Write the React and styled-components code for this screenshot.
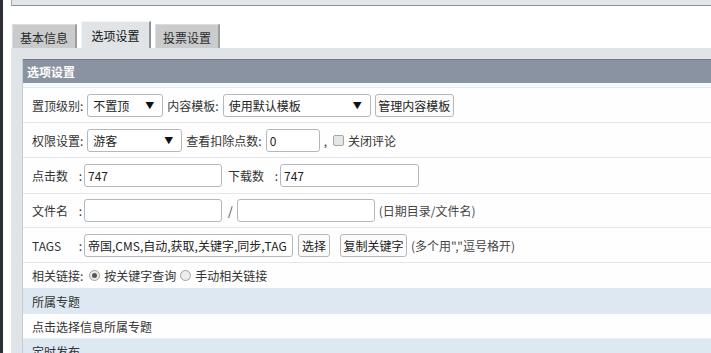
import React from 'react'
import styled, {createGlobalStyle} from 'styled-components'

const GlobalStyle = createGlobalStyle`
    html, body {
        margin: 0;
        padding: 0;
        background: #fff;
        font-family: "Noto Sans CJK SC", "Noto Sans", sans-serif;
        font-size: 12px;
        color: #333;
    }
`
const Page = styled.div`
    display: flex;
    height: 100vh;
    overflow: hidden;
`
const SideStrip = styled.div`
    width: 3px;
    background: #2d3035;
    flex-shrink: 0;
`
const Main = styled.div`
    flex: 1;
    display: flex;
    flex-direction: column;
    padding-left: 8px;
    min-width: 0;
`
const TopBar = styled.div`
    flex-shrink: 0;
    height: 5px;
    background: #e3e6e9;
    border-left: 1px solid #a3a8ae;
    border-bottom: 1px solid #8e939a;
`
const TabBar = styled.div`
    flex-shrink: 0;
    display: flex;
    align-items: flex-end;
    gap: 4px;
    height: 42px;
    padding-left: 1px;
`
const Tab = styled.div`
    box-sizing: border-box;
    height: ${p => p.active ? 27 : 24}px;
    width: ${p => p.active ? 70 : 65}px;
    display: flex;
    align-items: center;
    justify-content: center;
    background: ${p => p.active ? '#e1e4e6' : '#c9cbcd'};
    border-top: 1px solid ${p => p.active ? '#f4f5f6' : '#dadcde'};
    border-left: 1px solid ${p => p.active ? '#f4f5f6' : '#dadcde'};
    border-right: 2px solid ${p => p.active ? '#8d9298' : '#9a9ea3'};
    color: ${p => p.active ? '#111' : '#2a2a2a'};
    font-size: 12px;
    padding-top: ${p => p.active ? 0 : 2}px;
`
const TabBody = styled.div`
    flex: 1;
    min-height: 0;
    overflow: hidden;
    background: #e1e4e6;
    padding: 11px 0 0 11px;
`
const Panel = styled.div`
    background: #fff;
    border-left: 1px solid #c6ccd2;
`
const PanelHeader = styled.div`
    height: 23px;
    border-top: 1px solid #6f7884;
    background: #8a93a1;
    color: #fff;
    font-weight: bold;
    font-size: 12px;
    display: flex;
    align-items: center;
    padding-left: 4px;
`
const Rows = styled.div`
    padding-top: 4px;
    background: #f6f9fa;
`
const Row = styled.div`
    box-sizing: border-box;
    height: ${p => p.h}px;
    display: flex;
    align-items: center;
    gap: 4px;
    padding-left: 9px;
    border-top: 1px solid #e2e8ed;
    background: #fefefe;
    white-space: nowrap;
`
const SectionHead = styled.div`
    box-sizing: border-box;
    height: ${p => p.h || 25}px;
    display: flex;
    align-items: center;
    padding-left: 9px;
    background: #dde8f2;
    border-top: 1px solid ${p => p.line ? '#e9f0f6' : '#dde8f2'};
    color: #333;
`
const Label = styled.span`
    display: inline-flex;
    justify-content: space-between;
    width: ${p => p.w ? p.w + 'px' : 'auto'};
    margin-left: ${p => p.ml || 0}px;
    color: #333;
`
const SelectBox = styled.div`
    box-sizing: border-box;
    width: ${p => p.w}px;
    height: 23px;
    border: 1px solid #b4b8bd;
    border-radius: 3px;
    background: #fff;
    display: flex;
    align-items: center;
    justify-content: space-between;
    padding: 0 8px 0 5px;
    color: #222;
`
const Arrow = styled.span`
    font-size: 9px;
    color: #111;
`
const Field = styled.input`
    box-sizing: border-box;
    width: ${p => p.w}px;
    height: 23px;
    border: 1px solid #b4b8bd;
    border-radius: 3px;
    background: #fff;
    padding: 0 3px;
    font-family: inherit;
    font-size: 12px;
    color: #222;
    margin-left: ${p => p.ml || 0}px;
    outline: none;
`
const Button = styled.button`
    box-sizing: border-box;
    height: 23px;
    width: ${p => p.w}px;
    border: 1px solid #b4b8bd;
    border-radius: 3px;
    background: #fbfbfb;
    font-family: inherit;
    font-size: 12px;
    color: #222;
    padding: 0;
    margin-left: ${p => p.ml || 0}px;
`
const Check = styled.span`
    box-sizing: border-box;
    width: 11px;
    height: 11px;
    border: 1px solid #a6a6a6;
    border-radius: 2px;
    background: #e6e6e6;
    margin-left: ${p => p.ml || 0}px;
`
const Radio = styled.span`
    box-sizing: border-box;
    width: 11px;
    height: 11px;
    border: 1px solid #a0a0a0;
    border-radius: 50%;
    background: #ececec;
    display: inline-flex;
    align-items: center;
    justify-content: center;
    margin-left: ${p => p.ml || 0}px;

    &::after {
        content: '';
        width: 5px;
        height: 5px;
        border-radius: 50%;
        background: ${p => p.checked ? '#555' : 'transparent'};
    }
`
const Hint = styled.span`
    color: #444;
    margin-left: ${p => p.ml || 0}px;
`

const App = () => {
    return (
        <Page>
            <GlobalStyle />
            <SideStrip />
            <Main>
                <TopBar />
                <TabBar>
                    <Tab>基本信息</Tab>
                    <Tab active>选项设置</Tab>
                    <Tab>投票设置</Tab>
                </TabBar>
                <TabBody>
                    <Panel>
                        <PanelHeader>选项设置</PanelHeader>
                        <Rows>
                            <Row h={35}>
                                <Label>置顶级别:</Label>
                                <SelectBox w={76}>不置顶<Arrow>▼</Arrow></SelectBox>
                                <Label>内容模板:</Label>
                                <SelectBox w={148}>使用默认模板<Arrow>▼</Arrow></SelectBox>
                                <Button w={79}>管理内容模板</Button>
                            </Row>
                            <Row h={35}>
                                <Label>权限设置:</Label>
                                <SelectBox w={95}>游客<Arrow>▼</Arrow></SelectBox>
                                <Label>查看扣除点数:</Label>
                                <Field w={54} value="0" readOnly />
                                <span>,</span>
                                <Check ml={2} />
                                <span>关闭评论</span>
                            </Row>
                            <Row h={36}>
                                <Label w={50}><span>点击数</span><span>:</span></Label>
                                <Field w={138} ml={-2} value="747" readOnly />
                                <Label w={50} ml={2}><span>下载数</span><span>:</span></Label>
                                <Field w={139} ml={-2} value="747" readOnly />
                            </Row>
                            <Row h={34}>
                                <Label w={50}><span>文件名</span><span>:</span></Label>
                                <Field w={138} ml={-2} value="" readOnly />
                                <Hint ml={2}>/</Hint>
                                <Field w={138} value="" readOnly />
                                <Hint>(日期目录/文件名)</Hint>
                            </Row>
                            <Row h={35}>
                                <Label w={50}><span>TAGS</span><span>:</span></Label>
                                <Field w={209} ml={-2} value="帝国,CMS,自动,获取,关键字,同步,TAG" readOnly />
                                <Button w={32} ml={1}>选择</Button>
                                <Button w={67} ml={6}>复制关键字</Button>
                                <Hint>(多个用","逗号格开)</Hint>
                            </Row>
                            <Row h={26}>
                                <Label>相关链接:</Label>
                                <Radio checked ml={2} />
                                <span>按关键字查询</span>
                                <Radio />
                                <span>手动相关链接</span>
                            </Row>
                        </Rows>
                        <SectionHead h={25}>所属专题</SectionHead>
                        <Row h={25}>点击选择信息所属专题</Row>
                        <SectionHead h={25} line>定时发布</SectionHead>
                    </Panel>
                </TabBody>
            </Main>
        </Page>
    )
}

export default App
